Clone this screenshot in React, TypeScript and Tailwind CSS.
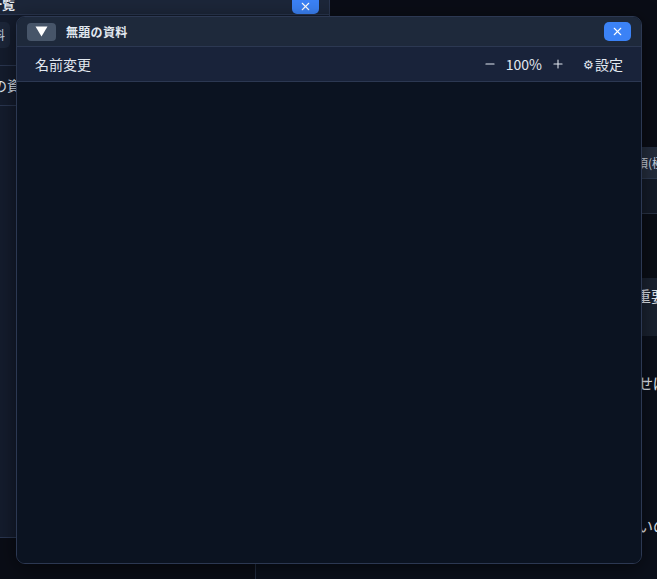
import React from "react";
import { X, Minus, Plus } from "lucide-react";

const font = "font-['Noto_Sans_CJK_JP','Noto_Sans',sans-serif]";

// background list window, mostly hidden behind the document window
const ListWindow = () => (
  <div className="absolute left-0 top-0 w-[330px] h-[538px] bg-[#141c2d] border-r border-b border-[#2a3650] flex flex-col">
    <div className="h-[15px] bg-[#1c2639] border-b border-[#2a3650] flex items-center justify-between pr-[10px]">
      <span className="text-[13px] font-bold text-[#e2e8f0] -ml-[11px] -mt-[6px]">一覧</span>
      <button className="w-[27px] h-[15px] -mt-[1px] rounded-b-[5px] bg-[#3b82f6] flex items-center justify-center">
        <X className="w-[13px] h-[13px] text-white" strokeWidth={2} />
      </button>
    </div>
    <div className="h-[51px] border-b border-[#2a3650] pt-[7px]">
      <div className="w-[10px] h-[26px] bg-[#1c2639] rounded-r-[5px] text-[12px] text-[#cbd5e1] flex items-center overflow-hidden">
        <span className="-ml-[7px]">料</span>
      </div>
    </div>
    <div className="h-[40px] border-b border-[#2a3650] flex items-center overflow-hidden">
      <span className="text-[14px] text-[#e2e8f0] -ml-[7px]">の資</span>
    </div>
  </div>
);

// background table window on the right, only its edge shows
const TableWindow = () => (
  <div className="absolute left-[255px] top-[147px] w-[500px] h-[440px] bg-[#0b101b] border-l border-t border-[#232d40] flex flex-col">
    <div className="h-[31px] bg-[#242d3d] border-b border-[#2e3a50] flex items-center pl-[380px] text-[12px] text-[#cbd5e1]">
      項(極
    </div>
    <div className="h-[35px] bg-[#141b28] border-b border-[#2a3446]" />
    <div className="h-[64px] bg-[#0a0e16]" />
    <div className="h-[58px] bg-[#1a2230] flex items-start pl-[380px] pt-[7px] text-[15px] text-[#e2e8f0]">
      重要
    </div>
    <div className="h-[36px]" />
    <div className="pl-[382px] text-[15px] text-[#e2e8f0]">せば</div>
    <div className="h-[120px]" />
    <div className="pl-[382px] text-[15px] text-[#e2e8f0]">いの</div>
  </div>
);

const DocumentWindow = () => (
  <div className="absolute left-[16px] top-[16px] w-[626px] h-[548px] rounded-[9px] border border-[#2c3852] bg-[#0b1321] overflow-hidden flex flex-col shadow-[0_4px_20px_rgba(0,0,0,0.5)]">
    <div className="h-[30px] shrink-0 bg-[#1e293b] border-b border-[#2c3852] flex items-center justify-between pl-[10px] pr-[10px]">
      <div className="flex items-center gap-[10px]">
        <button className="w-[29px] h-[18px] rounded-[4px] bg-[#475569] flex items-center justify-center">
          <svg width="13" height="11" viewBox="0 0 13 11">
            <path d="M0.5 0.5 H12.5 L6.5 10.5 Z" fill="#ffffff" />
          </svg>
        </button>
        <span className="text-[12px] font-bold text-[#e2e8f0] tracking-[0.3px]">無題の資料</span>
      </div>
      <button className="w-[27px] h-[19px] rounded-[5px] bg-[#3b82f6] flex items-center justify-center">
        <X className="w-[13px] h-[13px] text-white" strokeWidth={2} />
      </button>
    </div>
    <div className="h-[35px] shrink-0 bg-[#19233a] border-b border-[#2c3852] flex items-center justify-between pl-[18px] pr-[18px] text-[14px] text-[#e2e8f0]">
      <span>名前変更</span>
      <div className="flex items-center">
        <Minus className="w-[14px] h-[14px]" strokeWidth={1.8} />
        <span className="ml-[9px] text-[14px]">100%</span>
        <Plus className="ml-[9px] w-[14px] h-[14px]" strokeWidth={1.8} />
        <span className="ml-[18px] flex items-center">
          <span className="text-[12px] mr-[1px]">⚙</span>設定
        </span>
      </div>
    </div>
    <div className="flex-1 bg-[#0b1321]" />
  </div>
);

export default function App() {
  return (
    <div className={`relative w-[657px] h-[579px] overflow-hidden bg-[#0a0d16] ${font}`}>
      <TableWindow />
      <ListWindow />
      <DocumentWindow />
    </div>
  );
}
